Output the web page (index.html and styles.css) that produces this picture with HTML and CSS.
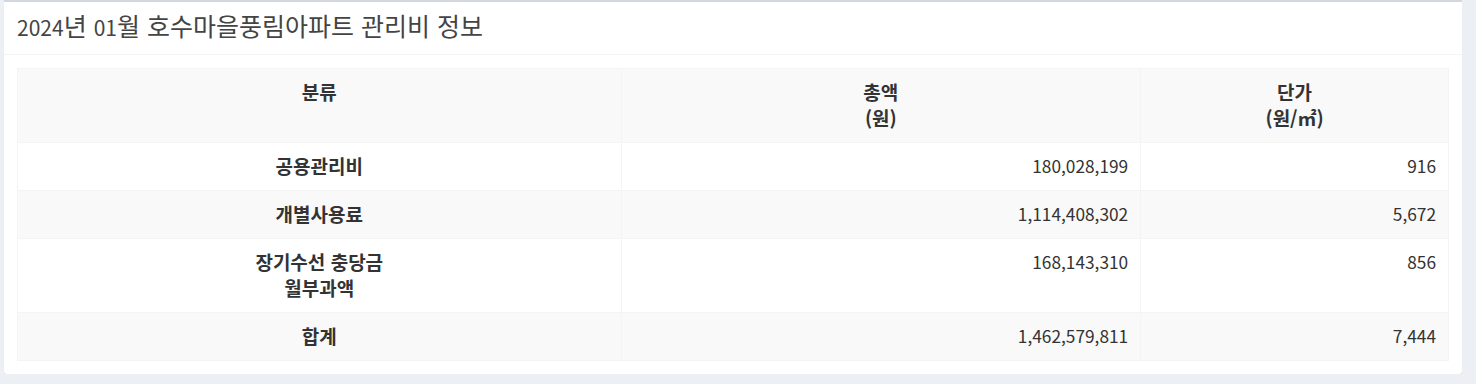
FILE: index.html
```html
<!DOCTYPE html>
<html lang="ko">
<head>
<meta charset="utf-8">
<link rel="stylesheet" href="styles.css">
</head>
<body>
<div class="box">
  <div class="box-header">
    <h3 class="box-title"><span class="num">2024</span>년 <span class="num">01</span>월 호수마을풍림아파트 관리비 정보</h3>
  </div>
  <div class="box-body">
    <table class="fee-table">
      <colgroup>
        <col class="c1"><col class="c2"><col class="c3">
      </colgroup>
      <thead>
        <tr><th>분류</th><th>총액<br>(원)</th><th>단가<br>(원/㎡)</th></tr>
      </thead>
      <tbody>
        <tr><th>공용관리비</th><td>180,028,199</td><td>916</td></tr>
        <tr><th>개별사용료</th><td>1,114,408,302</td><td>5,672</td></tr>
        <tr><th>장기수선 충당금<br>월부과액</th><td>168,143,310</td><td>856</td></tr>
        <tr><th>합계</th><td>1,462,579,811</td><td>7,444</td></tr>
      </tbody>
    </table>
  </div>
</div>
</body>
</html>
```
FILE: styles.css
```css
html, body {
  margin: 0;
  padding: 0;
  background: #ecf0f5;
  font-family: "Noto Sans CJK KR", "Noto Sans", sans-serif;
  color: #333;
}
body {
  padding: 0 14px 0 4px;
}
.box {
  background: #fff;
  border-top: 2px solid #d2d6de;
  border-radius: 0 0 3px 3px;
  box-shadow: 0 1px 1px rgba(0, 0, 0, 0.1);
}
.box-header {
  height: 46px;
  padding: 0 13px 6px;
  border-bottom: 1px solid #f4f4f4;
}
.box-title {
  margin: 0;
  font-size: 25px;
  font-weight: 400;
  color: #444;
  line-height: 46px;
  white-space: nowrap;
}
.box-title .num {
  font-size: 21px;
}
.box-body {
  padding: 13px;
}
.fee-table {
  width: 100%;
  border-collapse: collapse;
  line-height: 26px;
}
.fee-table .c1 { width: 604px; }
.fee-table .c2 { width: 520px; }
.fee-table .c3 { width: 308px; }
.fee-table th,
.fee-table td {
  border: 1px solid #f4f4f4;
  padding: 10px 12px 11px;
  vertical-align: top;
}
.fee-table th {
  font-size: 19px;
  font-weight: 700;
  text-align: center;
}
.fee-table td {
  font-size: 17.3px;
  text-align: right;
}
.fee-table thead tr {
  background: #f9f9f9;
}
.fee-table tbody tr:nth-child(even) {
  background: #f9f9f9;
}
```
